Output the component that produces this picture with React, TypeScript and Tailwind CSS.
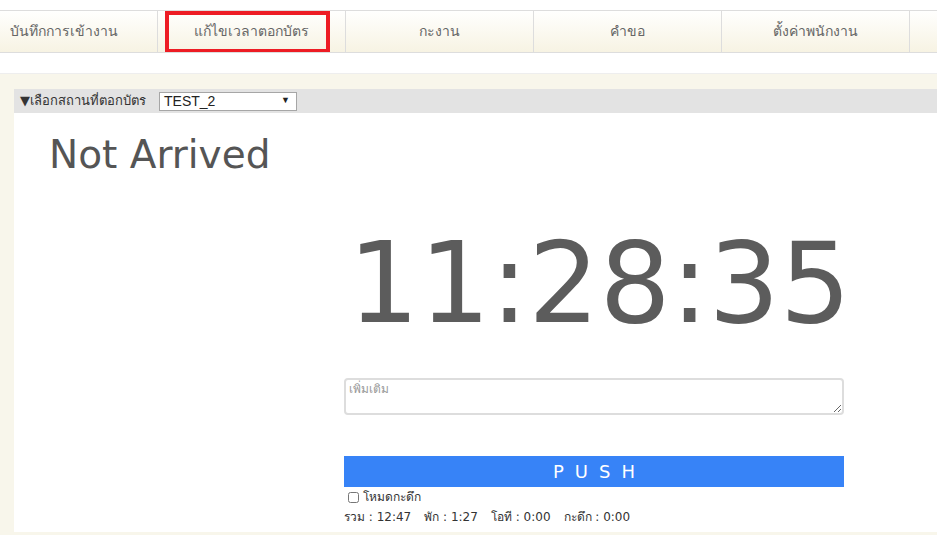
import React from 'react';

const navItems = ['บันทึกการเข้างาน', 'แก้ไขเวลาตอกบัตร', 'กะงาน', 'คำขอ', 'ตั้งค่าพนักงาน', ''];

export default function App() {
  return (
    <div className="w-[937px] h-[535px] overflow-hidden bg-white text-[#333] font-['Tahoma','DejaVu_Sans',sans-serif]">
      <div className="h-[10px]" />

      {/* top tabs */}
      <nav className="flex h-[43px] border-y border-[#dddddd] bg-gradient-to-b from-[#fffffe] to-[#f7f3e3] overflow-hidden">
        <div className="flex -ml-[30px] shrink-0">
          {navItems.map((label, i) => (
            <div
              key={i}
              className="relative w-[188px] shrink-0 border-r border-[#dddddd] flex items-center justify-center text-[14px] text-[#666]"
            >
              {label}
              {i === 1 && (
                <div className="absolute left-[7px] top-0 w-[165px] h-[42px] border-4 border-[#ed1c24]" />
              )}
            </div>
          ))}
        </div>
      </nav>

      <div className="h-[20px]" />

      <div className="bg-[#f8f6eb] border-t border-[#eeeeee] pl-[14px] pt-[15px] pb-[4px]">
        <div className="bg-white">
          {/* location selector bar */}
          <div className="h-[24px] bg-[#e3e3e3] flex items-center pl-[6px]">
            <span className="w-[139px] text-[13px] text-[#333]">▼เลือกสถานที่ตอกบัตร</span>
            <div className="w-[138px] h-[19px] border border-[#a6a6a6] bg-white flex items-center justify-between px-[4px] font-['Liberation_Sans',sans-serif] text-[14px] text-[#222]">
              <span>TEST_2</span>
              <span className="text-[9px] mr-[2px]">▼</span>
            </div>
          </div>

          <div className="h-[419px] pt-[18px]">
            <h1 className="pl-[35px] text-[39px] leading-[48px] text-[#555] font-['DejaVu_Sans',sans-serif]">
              Not Arrived
            </h1>

            <div className="ml-[330px] w-[500px] flex flex-col">
              <div className="mt-[39px] text-center text-[112px] leading-[130px] text-[#5c5c5c] font-['DejaVu_Sans',sans-serif] pl-[4px]">
                11:28:35
              </div>

              <textarea
                placeholder="เพิ่มเติม"
                className="mt-[30px] h-[37px] w-[500px] border-2 border-[#dddddd] rounded-[4px] px-[3px] py-[1px] text-[12px] leading-[16px] placeholder:text-[#999] outline-none"
              />

              <button className="mt-[41px] h-[31px] w-[500px] bg-[#3783f7] text-white text-[18px] tracking-[11px] pl-[11px] font-['DejaVu_Sans',sans-serif]">
                PUSH
              </button>

              <label className="mt-[3px] flex items-center gap-[4px] pl-[4px] text-[12px] leading-[15px] text-[#333]">
                <input type="checkbox" className="w-[11px] h-[11px] m-0" />
                โหมดกะดึก
              </label>

              <div className="mt-[5px] text-[12px] leading-[15px] text-[#333] flex gap-[13px]">
                <span>รวม : 12:47</span>
                <span>พัก : 1:27</span>
                <span>โอที : 0:00</span>
                <span>กะดึก : 0:00</span>
              </div>
            </div>
          </div>
        </div>
      </div>
    </div>
  );
}
